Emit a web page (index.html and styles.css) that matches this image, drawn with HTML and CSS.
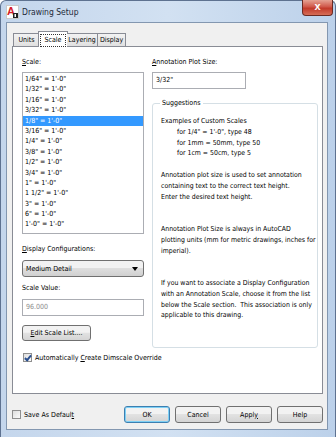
FILE: index.html
```html
<!DOCTYPE html>
<html lang="en">
<head>
    <meta charset="UTF-8">
    <title>Drawing Setup</title>
    <link rel="stylesheet" href="styles.css">
</head>
<body>

<div class="window">
    <!-- Title bar -->
    <div class="titlebar">
        <svg class="app-icon" width="13" height="14" viewBox="0 0 13 14">
            <rect x="0.5" y="0.5" width="12" height="13" fill="#fff" stroke="#c9c9c9"/>
            <text x="1" y="10" font-family="Liberation Sans" font-weight="bold" font-size="11" fill="#d4202a">A</text>
            <rect x="7" y="8" width="5" height="5" fill="#222"/>
            <rect x="8.5" y="9" width="1.5" height="3" fill="#fff"/>
        </svg>
        <span class="title">Drawing Setup</span>
        <div class="close"><span>x</span></div>
    </div>

    <div class="client">
        <div class="tabs">
            <div class="tab tab-units">Units</div>
            <div class="tab tab-scale active"><span class="focus">Scale</span></div>
            <div class="tab tab-layering">Layering</div>
            <div class="tab tab-display">Display</div>
        </div>

        <div class="panel">
            <div class="columns">
                <div class="col-left">
                    <div class="label"><u>S</u>cale:</div>
                    <ul class="listbox">
                        <li>1/64" = 1'-0"</li>
                        <li>1/32" = 1'-0"</li>
                        <li>1/16" = 1'-0"</li>
                        <li>3/32" = 1'-0"</li>
                        <li class="selected">1/8" = 1'-0"</li>
                        <li>3/16" = 1'-0"</li>
                        <li>1/4" = 1'-0"</li>
                        <li>3/8" = 1'-0"</li>
                        <li>1/2" = 1'-0"</li>
                        <li>3/4" = 1'-0"</li>
                        <li>1" = 1'-0"</li>
                        <li>1 1/2" = 1'-0"</li>
                        <li>3" = 1'-0"</li>
                        <li>6" = 1'-0"</li>
                        <li>1'-0" = 1'-0"</li>
                    </ul>

                    <div class="label display-label"><u>D</u>isplay Configurations:</div>
                    <div class="dropdown">
                        <span>Medium Detail</span>
                        <span class="arrow"></span>
                    </div>

                    <div class="label value-label">Scale Value:</div>
                    <div class="textbox disabled">96.000</div>

                    <div class="button edit-btn"><span><u>E</u>dit Scale List....</span></div>
                </div>

                <div class="col-right">
                    <div class="label"><u>A</u>nnotation Plot Size:</div>
                    <div class="textbox plot-size">3/32"</div>

                    <fieldset class="group">
                        <legend>Suggestions</legend>
                        <p>Examples of Custom Scales<br>
                            <span class="indent">for 1/4" = 1'-0", type 48</span><br>
                            <span class="indent">for 1mm = 50mm, type 50</span><br>
                            <span class="indent">for 1cm = 50cm, type 5</span></p>
                        <p>Annotation plot size is used to set annotation<br>
                            containing text to the correct text height.<br>
                            Enter the desired text height.</p>
                        <p class="wide-gap">Annotation Plot Size is always in AutoCAD<br>
                            plotting units (mm for metric drawings, inches for<br>
                            imperial).</p>
                        <p class="wide-gap">If you want to associate a Display Configuration<br>
                            with an Annotation Scale, choose it from the list<br>
                            below the Scale section.&nbsp; This association is only<br>
                            applicable to this drawing.</p>
                    </fieldset>
                </div>
            </div>

            <label class="check">
                <span class="box checked"></span>
                <span>Automatically <u>C</u>reate Dimscale Override</span>
            </label>
        </div>

        <div class="footer">
            <label class="check">
                <span class="box"></span>
                <span>Save As Defaul<u>t</u></span>
            </label>
            <div class="buttons">
                <div class="button default">OK</div>
                <div class="button">Cancel</div>
                <div class="button"><span>Appl<u>y</u></span></div>
                <div class="button">Help</div>
            </div>
        </div>
    </div>
</div>

</body>
</html>
```

FILE: styles.css
```css
* {
    box-sizing: border-box;
}

body {
    margin: 0;
    font-family: "DejaVu Sans Condensed", "Liberation Sans", sans-serif;
    font-size: 7px;
    color: #000;
}

u {
    text-decoration: underline;
}

.window {
    width: 336px;
    height: 437px;
    display: flex;
    flex-direction: column;
    padding: 0 7px 7px 5px;
    background: linear-gradient(to right, #c4d6ec, #d2e1f2 50%, #bcd1ea);
    border: 1px solid #5e7290;
    border-bottom: none;
    border-radius: 6px 6px 0 0;
}

/* Title bar */
.titlebar {
    height: 21px;
    display: flex;
    align-items: center;
    position: relative;
}

.app-icon {
    margin-right: 3px;
}

.title {
    font-size: 8.5px;
    color: #1e2a3a;
}

.close {
    position: absolute;
    top: -1px;
    right: -5px;
    width: 31px;
    height: 16px;
    border: 1px solid #6b2a22;
    border-top: none;
    border-radius: 0 0 4px 4px;
    background: linear-gradient(#e5a293, #d0584a 45%, #c23a2a 55%, #d56d57);
    display: flex;
    align-items: center;
    justify-content: center;
}

.close span {
    color: #fff;
    font-family: "Liberation Sans", sans-serif;
    font-weight: bold;
    font-size: 11px;
    line-height: 11px;
    margin-top: -2px;
}

/* Client area */
.client {
    flex: 1;
    background: #f0f0f0;
    border: 1px solid #8397b0;
    padding: 7px 4px 0 5px;
    display: flex;
    flex-direction: column;
}

.tabs {
    display: flex;
    height: 16px;
    align-items: flex-end;
    padding-left: 1px;
    position: relative;
    z-index: 1;
}

.tab {
    height: 13px;
    border: 1px solid #898c95;
    border-bottom: none;
    border-right: none;
    background: linear-gradient(#f2f2f2, #e0e0e0);
    line-height: 12px;
    text-align: center;
    white-space: nowrap;
}

.tab-units {
    width: 26px;
}

.tab-layering {
    width: 30px;
}

.tab-display {
    width: 29px;
    border-right: 1px solid #898c95;
}

.tab.active {
    width: 30px;
    height: 16px;
    margin-bottom: -1px;
    background: #fff;
    border-right: 1px solid #898c95;
    padding: 2px 1px 0;
    line-height: 11px;
    margin-left: -1px;
    margin-right: -1px;
}

.tab.active + .tab {
    border-left: none;
}

.focus {
    display: block;
    border: 1px dotted #333;
}

.panel {
    height: 348px;
    background: #fff;
    border: 1px solid #898c95;
    padding: 10px 4px 0 9px;
    display: flex;
    flex-direction: column;
    white-space: nowrap;
}

.columns {
    display: flex;
    gap: 8px;
}

.col-left {
    flex: none;
    width: 122px;
    display: flex;
    flex-direction: column;
}

.col-right {
    flex: 1;
    min-width: 0;
    display: flex;
    flex-direction: column;
}

.label {
    height: 10px;
    line-height: 10px;
    margin-bottom: 5px;
}

.display-label {
    margin-top: 10px;
    margin-bottom: 6px;
}

.value-label {
    margin-top: 6px;
    margin-bottom: 6px;
}

.listbox {
    list-style: none;
    margin: 0;
    height: 162px;
    padding: 1px 0 0 0;
    border: 1px solid #abadb3;
    overflow: hidden;
}

.listbox li {
    height: 10.4px;
    line-height: 10.4px;
    padding-left: 2px;
}

.listbox li.selected {
    background: #3399ff;
    color: #fff;
}

.dropdown {
    height: 17px;
    border: 1px solid #707070;
    border-radius: 3px;
    background: linear-gradient(#f2f2f2 45%, #dedede 50%, #d0d0d0);
    display: flex;
    align-items: center;
    justify-content: space-between;
    padding: 0 5px 0 3px;
}

.arrow {
    width: 0;
    height: 0;
    border-left: 3px solid transparent;
    border-right: 3px solid transparent;
    border-top: 4px solid #000;
}

.textbox {
    height: 17px;
    border: 1px solid #abadb3;
    padding-left: 3px;
    line-height: 15px;
    background: #fff;
}

.textbox.disabled {
    color: #8d8d8d;
}

.plot-size {
    width: 94px;
}

.button {
    height: 17px;
    border: 1px solid #707070;
    border-radius: 3px;
    background: linear-gradient(#f2f2f2 45%, #e2e2e2 50%, #d4d4d4);
    display: flex;
    align-items: center;
    justify-content: center;
    white-space: nowrap;
}

.edit-btn {
    width: 69px;
    height: 16px;
    margin-top: 9px;
}

.group {
    margin: 9px 0 0 0;
    min-width: 0;
    height: 250px;
    border: 1px solid #d5dfe5;
    border-radius: 3px;
    padding: 8px 1px 0 8px;
    font-size: 6.9px;
}

.group legend {
    padding: 0 2px;
    margin-left: -1px;
    line-height: 10px;
    font-size: 7px;
}

.group p {
    margin: 0 0 10.8px 0;
    line-height: 10.8px;
}

.group p.wide-gap {
    padding-top: 10.8px;
}

.indent {
    padding-left: 16px;
}

.check {
    display: flex;
    align-items: center;
    gap: 3px;
    white-space: nowrap;
}

.panel .check {
    margin-top: 5px;
    margin-left: 1px;
}

.box {
    width: 9px;
    height: 9px;
    border: 1px solid #8f8f8f;
    background: linear-gradient(135deg, #dedede, #fbfbfb);
    position: relative;
}

.box.checked::after {
    content: "";
    position: absolute;
    left: 2px;
    top: 0;
    width: 2px;
    height: 5px;
    border-right: 2px solid #2a4f8f;
    border-bottom: 2px solid #2a4f8f;
    transform: rotate(40deg);
}

.footer {
    display: flex;
    align-items: center;
    justify-content: space-between;
    margin-top: 12px;
}

.buttons {
    display: flex;
    gap: 5px;
}

.buttons .button {
    width: 46px;
    height: 17px;
}

.button.default {
    border-color: #3c7fb1;
    box-shadow: inset 0 0 0 1px #7ed0f5;
}
```
